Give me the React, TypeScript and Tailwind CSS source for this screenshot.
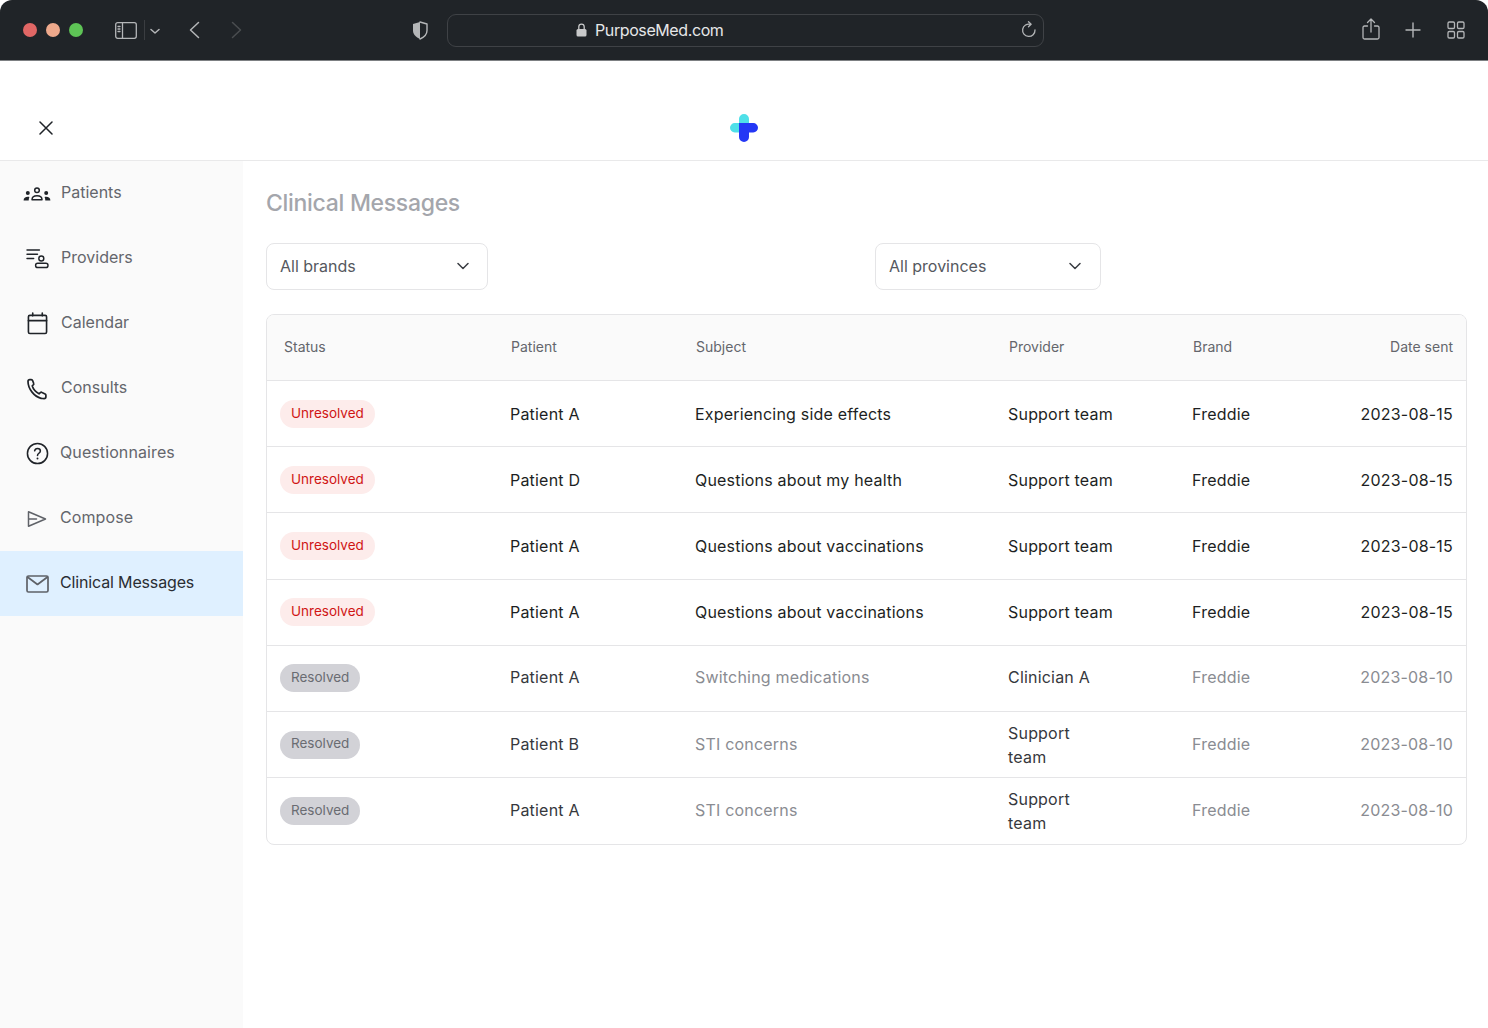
import React from "react";

const font = { fontFamily: "Inter, 'Noto Sans', sans-serif" };

type Row = { status: string; patient: string; subject: string; provider: React.ReactNode; date: string };

const rows: Row[] = [
  { status: "Unresolved", patient: "Patient A", subject: "Experiencing side effects", provider: "Support team", date: "2023-08-15" },
  { status: "Unresolved", patient: "Patient D", subject: "Questions about my health", provider: "Support team", date: "2023-08-15" },
  { status: "Unresolved", patient: "Patient A", subject: "Questions about vaccinations", provider: "Support team", date: "2023-08-15" },
  { status: "Unresolved", patient: "Patient A", subject: "Questions about vaccinations", provider: "Support team", date: "2023-08-15" },
  { status: "Resolved", patient: "Patient A", subject: "Switching medications", provider: "Clinician A", date: "2023-08-10" },
  { status: "Resolved", patient: "Patient B", subject: "STI concerns", provider: <>Support<br />team</>, date: "2023-08-10" },
  { status: "Resolved", patient: "Patient A", subject: "STI concerns", provider: <>Support<br />team</>, date: "2023-08-10" },
];

const s = { fill: "none", stroke: "#1f2328", strokeWidth: 1.7, strokeLinecap: "round" as const, strokeLinejoin: "round" as const };

const icons: Record<string, React.ReactNode> = {
  Patients: (
    <svg width="28" height="14" viewBox="0 0 28 14">
      <circle cx="14" cy="3.200" r="2.300" {...s} strokeWidth={1.500} />
      <path d="M9 12.700c0-2.700 2.200-4 5-4s5 1.300 5 4z" {...s} strokeWidth={1.500} />
      <circle cx="4.800" cy="6" r="2" fill="#1f2328" />
      <circle cx="23.200" cy="6" r="2" fill="#1f2328" />
      <path d="M0.600 13.500c0-2.400 1.700-3.700 4.300-3.700.6 0 1.100.1 1.500.2-.5 1-.7 2.200-.7 3.500z" fill="#1f2328" />
      <path d="M27.400 13.500c0-2.400-1.700-3.700-4.300-3.700-.6 0-1.100.1-1.500.2.500 1 .7 2.200.7 3.500z" fill="#1f2328" />
    </svg>
  ),
  Providers: (
    <svg width="23" height="21" viewBox="0 0 24 22" className="ml-px">
      <path d="M1 2h13M1 6.500h11M1 11h7" {...s} strokeWidth={1.500} />
      <circle cx="16" cy="11" r="2.600" {...s} strokeWidth={1.500} />
      <rect x="10" y="16" width="13" height="4.500" rx="2.250" {...s} strokeWidth={1.500} />
    </svg>
  ),
  Calendar: (
    <svg width="21" height="23" viewBox="0 0 22 24">
      <rect x="1.500" y="3.500" width="19" height="19" rx="1.500" {...s} />
      <path d="M1.500 9h19M6 1v3M16 1v3" {...s} />
    </svg>
  ),
  Consults: (
    <svg width="22" height="22" viewBox="0 0 22 22">
      <path d="M2 3.500c0-1 .8-1.800 1.800-1.800h1.500c.7 0 1.200.4 1.400 1l1 2.800c.2.500 0 1.100-.4 1.400L6.200 7.800c.9 3 3.800 6.400 6.800 8l1.300-1.200c.5-.4 1.200-.5 1.700-.2l3.100 1.500c.5.300.8.800.8 1.300v1.500c0 1-.8 1.900-1.800 1.900-1 0-2 0-3-.3C8.400 18.700 2 11 2 3.500z" {...s} />
    </svg>
  ),
  Questionnaires: (
    <svg width="23" height="23" viewBox="0 0 24 24">
      <circle cx="12" cy="12" r="10.500" {...s} strokeWidth={1.600} />
      <path d="M9 9.200c.3-1.500 1.500-2.400 3-2.400 1.700 0 3 1.100 3 2.600 0 2.300-3 2.400-3 4.600" {...s} strokeWidth={1.600} />
      <circle cx="12" cy="17.300" r="1" fill="#1f2328" />
    </svg>
  ),
  Compose: (
    <svg width="20" height="18" viewBox="0 0 20 18" className="mr-px">
      <path d="M1.500 1.800v14.400L18.500 9zM1.500 9h8" {...s} stroke="#5f6268" strokeWidth={1.500} />
    </svg>
  ),
  "Clinical Messages": (
    <svg width="23" height="18" viewBox="0 0 23 18">
      <rect x="1" y="1" width="21" height="16" rx="1.500" {...s} stroke="#5f6268" />
      <path d="M1.500 2l10 7.500 10-7.500" {...s} stroke="#5f6268" />
    </svg>
  ),
};

const nav = ["Patients", "Providers", "Calendar", "Consults", "Questionnaires", "Compose", "Clinical Messages"];

function Chevron({ className = "" }: { className?: string }) {
  return (
    <svg width="12" height="8" viewBox="0 0 12 8" className={className}>
      <path d="M1 1.500l5 5 5-5" fill="none" stroke="#3a3d42" strokeWidth="1.500" strokeLinecap="round" strokeLinejoin="round" />
    </svg>
  );
}

function BrowserBar() {
  const st = { fill: "none", stroke: "#b4b6b8", strokeWidth: 1.300, strokeLinecap: "round" as const, strokeLinejoin: "round" as const };
  return (
    <div className="relative h-[61px] bg-white">
      <div className="flex h-[61px] items-center rounded-t-[12px] border-b border-[#7d8083] bg-[#202428]">
        <div className="ml-[23px] flex gap-[9px]">
          <span className="h-[14px] w-[14px] rounded-full bg-[#e16765]" />
          <span className="h-[14px] w-[14px] rounded-full bg-[#eea98c]" />
          <span className="h-[14px] w-[14px] rounded-full bg-[#5ec456]" />
        </div>
        <svg width="22" height="17" viewBox="0 0 22 17" className="ml-[32px]">
          <rect x="0.700" y="0.700" width="20.600" height="15.600" rx="2" {...st} />
          <path d="M7.500 1v15M3 4.500h2M3 7h2M3 9.500h2" {...st} />
        </svg>
        <span className="ml-[7px] h-[20px] w-px bg-[#3a3d41]" />
        <svg width="10" height="7" viewBox="0 0 10 7" className="ml-[5px] mt-[2px]">
          <path d="M1 1.500l4 3.500 4-3.500" {...st} strokeWidth={1.500} />
        </svg>
        <svg width="11" height="18" viewBox="0 0 11 18" className="ml-[29px]">
          <path d="M9.500 1.500L1.500 9l8 7.500" {...st} strokeWidth={1.500} />
        </svg>
        <svg width="11" height="18" viewBox="0 0 11 18" className="ml-[31px]">
          <path d="M1.500 1.500l8 7.500-8 7.500" {...st} stroke="#4a4d50" strokeWidth={1.500} />
        </svg>
        <svg width="16" height="19" viewBox="0 0 16 19" className="ml-[170px]">
          <path d="M8 1L1 3v6.500c0 4 3 6.800 7 8.500V1z" fill="#b4b6b8" />
          <path d="M8 1l7 2v6.500c0 4-3 6.800-7 8.500" {...st} strokeWidth={1.400} />
        </svg>
        <div className="relative ml-[19px] flex h-[33px] w-[597px] items-center rounded-[9px] border border-[#3f4246] pl-[128px]">
          <svg width="11" height="14" viewBox="0 0 11 14" className="mr-[8px]">
            <rect x="0.500" y="6" width="10" height="7.500" rx="1.500" fill="#c8c9ca" />
            <path d="M2.800 6V3.800a2.700 2.700 0 015.400 0V6" fill="none" stroke="#c8c9ca" strokeWidth="1.300" />
          </svg>
          <span className="text-[16px] tracking-[-0.4px] text-[#e6e7e8]" style={font}>PurposeMed.com</span>
          <svg width="16" height="18" viewBox="0 0 16 18" className="absolute right-[6px] top-[6px]">
            <path d="M9.500 3.300A6.200 6.200 0 1014 9" {...st} />
            <path d="M7.500 0.800l2.600 2.500-2.600 2.500" {...st} />
          </svg>
        </div>
        <svg width="18" height="22" viewBox="0 0 18 22" className="ml-[318px] mb-[2px]">
          <path d="M5.500 8H2.500a1.500 1.500 0 00-1.500 1.500v10A1.500 1.500 0 002.500 21h13a1.500 1.500 0 001.500-1.500v-10A1.500 1.500 0 0015.500 8h-3M9 14V1.500M5.500 4.500L9 1l3.500 3.500" {...st} />
        </svg>
        <svg width="16" height="16" viewBox="0 0 16 16" className="ml-[25px]">
          <path d="M8 1v14M1 8h14" {...st} strokeWidth={1.400} />
        </svg>
        <svg width="18" height="18" viewBox="0 0 18 18" className="ml-[26px]">
          <rect x="1" y="1" width="6.500" height="6.500" rx="1.300" {...st} />
          <rect x="10.500" y="1" width="6.500" height="6.500" rx="1.300" {...st} />
          <rect x="1" y="10.500" width="6.500" height="6.500" rx="1.300" {...st} />
          <rect x="10.500" y="10.500" width="6.500" height="6.500" rx="1.300" {...st} />
        </svg>
      </div>
    </div>
  );
}

function Logo() {
  return (
    <svg width="28" height="28" viewBox="0 0 28 28">
      <path d="M9 9V5a5 5 0 0110 0v4zM9 9H4.750a4.750 4.750 0 000 9.500H9z" fill="#4fe0e8" />
      <path d="M9 9h14.250a4.750 4.750 0 010 9.500H19V23a5 5 0 01-10 0z" fill="#2437f5" />
    </svg>
  );
}

const cols = "grid-cols-[243px_185px_313px_184px_1fr_auto]";

export default function App() {
  return (
    <div className="flex h-[1028px] w-[1488px] flex-col overflow-hidden bg-white" style={font}>
      <BrowserBar />
      <header className="relative flex h-[100px] items-end justify-center border-b border-[#e9e9ea] pb-[18px]">
        <svg width="14" height="14" viewBox="0 0 14 14" className="absolute bottom-[25px] left-[39px]">
          <path d="M1 1l12 12M13 1L1 13" fill="none" stroke="#1f2328" strokeWidth="1.500" strokeLinecap="round" />
        </svg>
        <Logo />
      </header>
      <div className="flex flex-1">
        <aside className="w-[243px] bg-[#fafafa]">
          {nav.map((n) => {
            const active = n === "Clinical Messages";
            const flush = n === "Questionnaires" || n === "Compose";
            return (
              <div key={n} className={`flex h-[65px] items-center ${active ? "bg-[#dff0ff] text-[#2a2d33]" : "text-[#64666c]"}`}>
                <span className="flex w-[60px] shrink-0 items-center justify-center pl-[14px]">{icons[n]}</span>
                <span className={`pb-[3px] text-[16px] leading-none ${active ? "tracking-[-0.15px]" : flush ? "tracking-[0.1px]" : "pl-px"}`}>{n}</span>
              </div>
            );
          })}
        </aside>
        <main className="flex-1 pl-[23px] pr-[21px]">
          <h1 className="mt-[26px] text-[23px] font-medium leading-[32px] tracking-[-0.3px] text-[#a4a6ac]">Clinical Messages</h1>
          <div className="mt-[24px] flex">
            <div className="flex h-[47px] w-[222px] items-center justify-between rounded-[8px] border border-[#e5e5e7] pb-[1px] pl-[13px] pr-[18px] text-[16px] text-[#55585e]">
              All brands <Chevron />
            </div>
            <div className="ml-[387px] flex h-[47px] w-[226px] items-center justify-between rounded-[8px] border border-[#e5e5e7] pb-[1px] pl-[13px] pr-[19px] text-[16px] text-[#55585e]">
              All provinces <Chevron />
            </div>
          </div>
          <div className="mt-[24px] overflow-hidden rounded-[8px] border border-[#e5e5e7]">
            <div className={`grid h-[66px] ${cols} items-center border-b border-[#e5e5e7] bg-[#fafafa] pb-[2px] pr-[13px] text-[14px] text-[#64666c]`}>
              <span className="pl-[17px]">Status</span>
              <span className="pl-px">Patient</span>
              <span className="pl-px">Subject</span>
              <span className="pl-px">Provider</span>
              <span className="pl-px">Brand</span>
              <span className="text-right">Date sent</span>
            </div>
            {rows.map((r, i) => {
              const open = r.status === "Unresolved";
              const lift = open ? "" : "-translate-y-px";
              const single = typeof r.provider === "string";
              return (
                <div key={i} className={`grid h-[66.2px] ${cols} items-center pr-[13px] text-[16px] tracking-[0.2px] ${i < rows.length - 1 ? "border-b border-[#e5e5e7]" : ""} ${open ? "text-[#1d1f23]" : "text-[#8a8c92]"}`}>
                  <span className="pl-[13px]">
                    <span className={`inline-flex h-[28px] items-center rounded-full px-[11px] pb-[2px] text-[13.500px] tracking-normal ${open ? "bg-[#fdeceb] text-[#d01515]" : "bg-[#d2d2d7] text-[#6a6c72]"}`}>{r.status}</span>
                  </span>
                  <span className={`${lift} ${open ? "" : "text-[#36383d]"}`}>{r.patient}</span>
                  <span className={lift}>{r.subject}</span>
                  <span className={`leading-[24px] ${single ? lift : ""} ${open ? "" : "text-[#36383d]"}`}>{r.provider}</span>
                  <span className={lift}>Freddie</span>
                  <span className={`text-right ${lift}`}>{r.date}</span>
                </div>
              );
            })}
          </div>
        </main>
      </div>
    </div>
  );
}
